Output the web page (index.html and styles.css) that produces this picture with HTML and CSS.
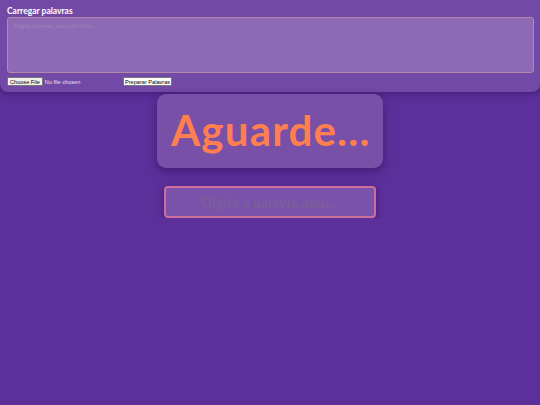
FILE: index.html
```html
<!doctype html>
<html lang="pt">
    <head>
        <meta charset="utf-8">
        <title>Palavras</title>
        <link rel="stylesheet" href="styles.css">
    </head>
    <body>
        <div class="loader">
            <label for="lista">Carregar palavras</label>
            <textarea id="lista" placeholder="Digite palavras, uma por linha..."></textarea>
            <div class="loader-actions">
                <input type="file" id="arquivo">
                <input type="button" id="preparar" value="Preparar Palavras">
            </div>
        </div>

        <div class="game">
            <div class="word-card">Aguarde...</div>
            <input type="text" class="answer" placeholder="Digite a palavra aqui...">
        </div>
    </body>
</html>
```

FILE: styles.css
```css
body {
    margin: 0;
    background: #5c2f9a;
    font-family: "Lato", "Noto Sans", sans-serif;
    color: #fff;
}
.loader {
    background: #7249a6;
    padding: 6px 6px 6px 7px;
    border-radius: 0 0 8px 8px;
    box-shadow: 0 2px 6px rgba(40, 10, 80, 0.45);
}
.loader label {
    display: block;
    font-family: "Lato", sans-serif;
    font-size: 8.5px;
    font-weight: bold;
    line-height: 11px;
}
.loader textarea {
    display: block;
    box-sizing: border-box;
    width: 100%;
    height: 56px;
    background: #8e6ab4;
    border: 1px solid #b58aa6;
    border-radius: 3px;
    font-family: inherit;
    font-size: 6px;
    padding: 4px 6px;
    outline: none;
    resize: none;
}
.loader textarea::placeholder {
    color: #9a86b6;
}
.loader-actions {
    display: flex;
    align-items: center;
    gap: 5px;
    margin-top: 4px;
    height: 9px;
}
#arquivo {
    font-family: "Liberation Sans", sans-serif;
    font-size: 5.6px;
    width: 111px;
    color: #e9e0f2;
}
#arquivo::file-selector-button {
    font-family: inherit;
    font-size: 5.6px;
    padding: 0 2px;
    margin-right: 2px;
    height: 9px;
    border: 1px solid #767676;
    border-radius: 0;
    background: #f0f0f0;
}
#preparar {
    font-size: 5.6px;
    font-family: "Liberation Sans", sans-serif;
    padding: 0 1px;
    height: 9px;
    border: 1px solid #767676;
    background: #fff;
}
.game {
    display: flex;
    flex-direction: column;
    align-items: center;
    padding-top: 2px;
}
.word-card {
    background: #7850a8;
    color: #ff7f50;
    font-size: 42px;
    font-weight: bold;
    letter-spacing: 1.2px;
    padding: 11px 14px 13px;
    border-radius: 9px;
    box-shadow: 0 3px 8px rgba(40, 10, 80, 0.5);
    width: 198px;
    text-align: center;
}
.answer {
    margin-top: 18px;
    box-sizing: border-box;
    width: 212px;
    height: 32px;
    background: #7a52aa;
    border: 2px solid #c96f9a;
    border-radius: 4px;
    font-family: inherit;
    font-size: 14px;
    font-weight: bold;
    text-align: center;
    outline: none;
    box-shadow: 0 2px 6px rgba(40, 10, 80, 0.5);
}
.answer::placeholder {
    color: #7d5e9a;
}
```
